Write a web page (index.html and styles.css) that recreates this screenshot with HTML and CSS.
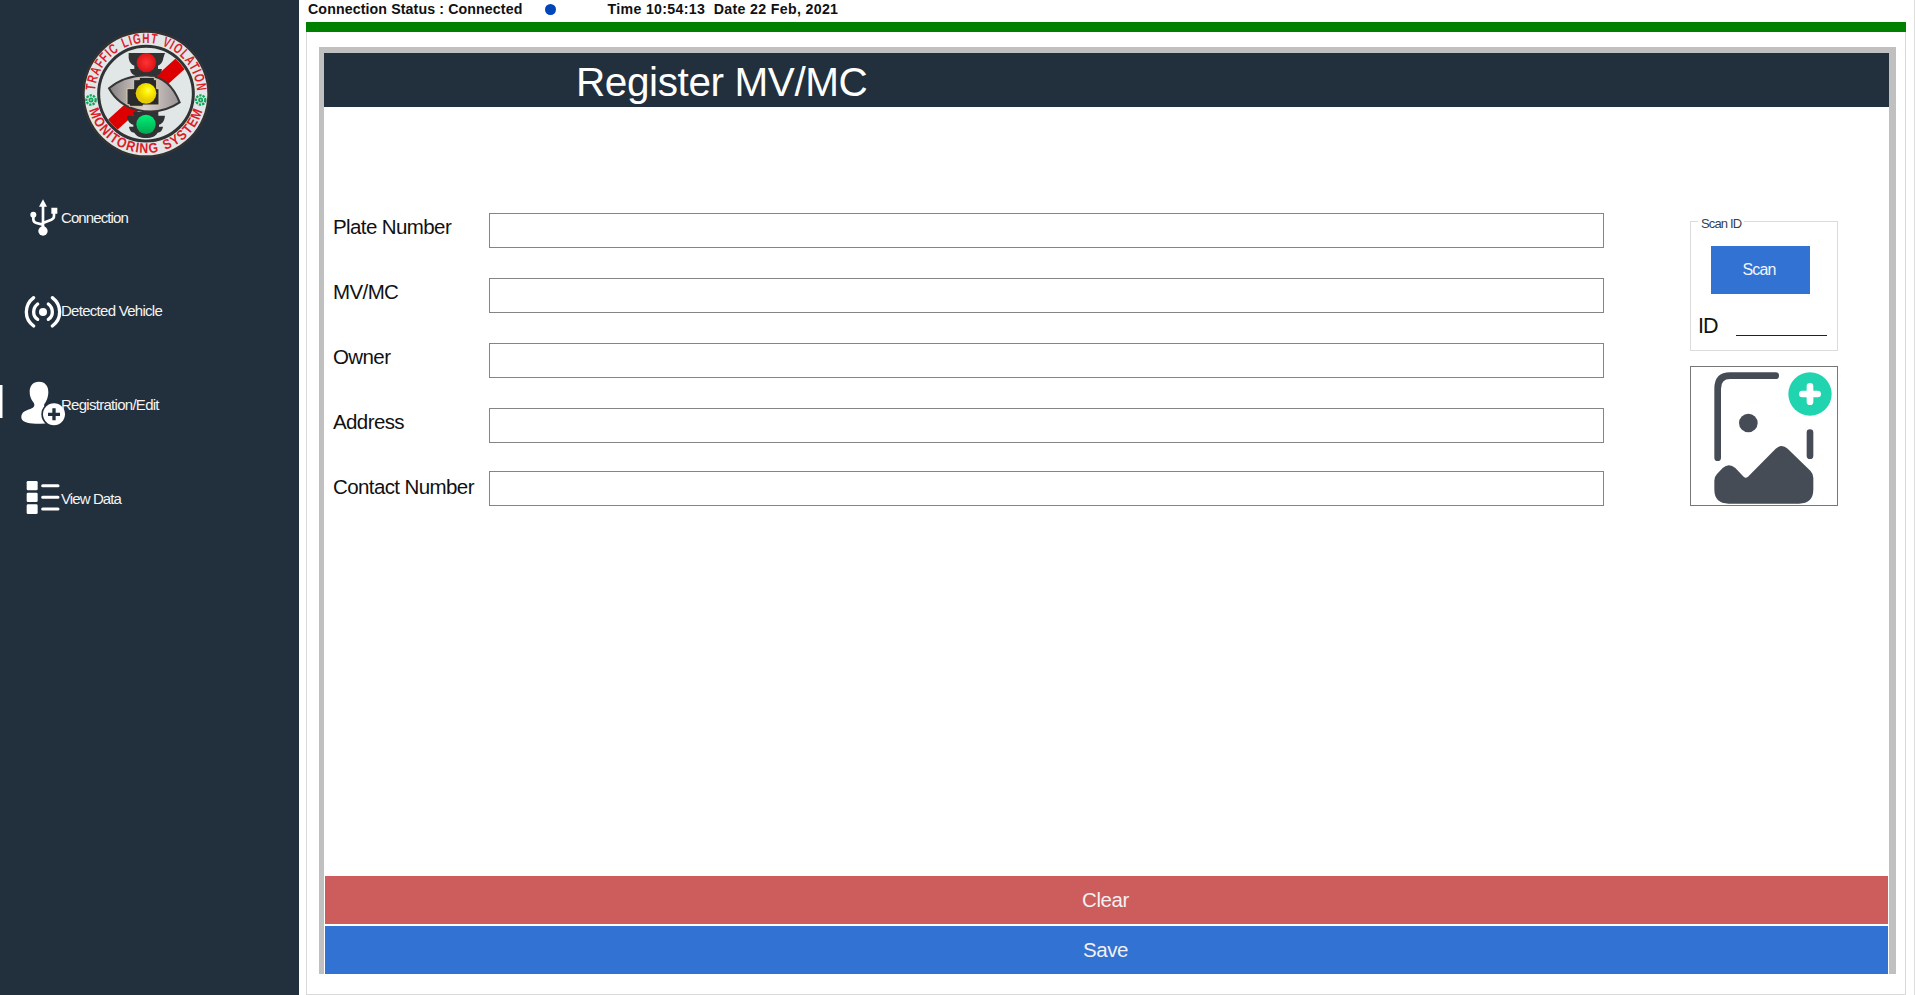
FILE: index.html
```html
<!DOCTYPE html>
<html lang="en">
<head>
<meta charset="utf-8">
<title>Register MV/MC</title>
<link rel="stylesheet" href="styles.css">
</head>
<body>
<div class="app">
  <aside class="sidebar">
    <svg class="logo" viewBox="0 0 435 435">
      <defs>
        <path id="arc-top" d="M60 222A153 153 0 0 1 366 222"/>
        <path id="arc-bottom" d="M36 222A177 177 0 0 0 390 222"/>
        <radialGradient id="red"><stop offset="0" stop-color="#f33"/><stop offset="1" stop-color="#dc1218"/></radialGradient>
        <radialGradient id="yellow" cx=".6" cy=".35"><stop offset="0" stop-color="#fffb70"/><stop offset=".35" stop-color="#fff200"/><stop offset="1" stop-color="#e6cc00"/></radialGradient>
        <linearGradient id="green" x2="0" y2="1"><stop offset="0" stop-color="#00f078"/><stop offset="1" stop-color="#00a850"/></linearGradient>
        <linearGradient id="eye"><stop offset="0" stop-color="#858182"/><stop offset=".5" stop-color="#ddd2ce"/><stop offset="1" stop-color="#999394"/></linearGradient>
        <clipPath id="disc"><circle cx="213" cy="221" r="137"/></clipPath>
      </defs>
      <circle cx="213" cy="222" r="192" fill="#303234"/>
      <circle cx="213" cy="222" r="184" fill="#e1e7e7"/>
      <circle cx="213" cy="221" r="142" fill="#e1e7e7" stroke="#303234" stroke-width="9"/>
      <path d="M90 335L345 105" stroke="#dc0000" stroke-width="42" clip-path="url(#disc)"/>
      <path d="M161 99h109l-5 15c-2 14-9 20-16 23v10h12c-2 12-8 18-14 18v10h-67v-10c-7 0-13-6-15-18h13v-10c-9-3-15-10-17-23z" fill="#303234"/>
      <path d="M156 287h19v-12h75v12h20c-2 17-9 25-18 27v6h12c-2 12-8 17-16 18-6 10-17 16-35 16s-29-6-35-16c-9-1-14-6-16-18h13v-6c-10-2-17-10-19-27z" fill="#303234"/>
      <path d="M102 205C135 178 175 165 222 167C267 171 296 201 314 247C275 273 237 282 187 270C148 260 119 237 102 205z" fill="url(#eye)" stroke="#353536" stroke-width="6"/>
      <path d="M156 206h20v-27h17v-7h45v7h7v27h7v49h-48v4h-41v-5h-7z" fill="#292a2c" stroke="#d6cbb0" stroke-width="3"/>
      <circle cx="214" cy="128" r="29" fill="url(#red)"/>
      <circle cx="213" cy="220" r="31" fill="url(#yellow)"/>
      <circle cx="213" cy="313" r="29" fill="url(#green)"/>
      <g fill="none" stroke="#0ca65b">
        <circle cx="48" cy="240" r="14" stroke-width="7" stroke-dasharray="7 3"/><circle cx="48" cy="240" r="5" stroke-width="5"/>
        <circle cx="377" cy="240" r="14" stroke-width="7" stroke-dasharray="7 3"/><circle cx="377" cy="240" r="5" stroke-width="5"/>
      </g>
      <text class="logo-text"><textPath href="#arc-top" startOffset="10" textLength="464" lengthAdjust="spacingAndGlyphs">TRAFFIC LIGHT VIOLATION</textPath></text>
      <text class="logo-text"><textPath href="#arc-bottom" startOffset="48" textLength="460" lengthAdjust="spacingAndGlyphs">MONITORING SYSTEM</textPath></text>
    </svg>
    <nav class="nav">
      <a class="nav-item">
        <svg class="nav-icon" viewBox="0 24 183 180">
          <path d="M129 155V78M100 108v13q0 9 9 11l20 5M162 98v13q0 8-8 11l-25 10" fill="none" stroke="#fff" stroke-width="8"/>
          <path d="M129 61l12 22h-24zM154 86h18v18h-18z" fill="#fff"/>
          <circle cx="100" cy="107" r="9" fill="#fff"/><circle cx="129" cy="156" r="14" fill="#fff"/>
        </svg>
        <span>Connection</span>
      </a>
      <a class="nav-item">
        <svg class="nav-icon" viewBox="0 304 183 180">
          <path d="M101 354q-22 17-22 43t22 42M157 354q22 17 22 43t-22 42M113 373q-12 9-12 24t12 22M145 373q12 9 12 24t-12 22" fill="none" stroke="#fff" stroke-width="10" stroke-linecap="round"/>
          <circle cx="129" cy="397" r="12" fill="#fff"/>
        </svg>
        <span class="wide">Detected Vehicle</span>
      </a>
      <a class="nav-item active">
        <svg class="nav-icon" viewBox="0 16 183 180">
          <path d="M117 39c19 0 29 14 28 33-1 17-7 27-12 34-3 9 5 13 14 16v42q-15 2-40 1c-26-1-42-7-43-18-1-17 13-21 27-26 12-4 15-11 9-20-7-10-11-19-11-32 0-18 10-30 28-30z" fill="#fff"/>
          <circle cx="162" cy="137" r="38" fill="#222f3c"/><circle cx="162" cy="137" r="33" fill="#fff"/>
          <path d="M162 119v36M144 137h36" stroke="#222f3c" stroke-width="10"/>
        </svg>
        <span class="wide">Registration/Edit</span>
      </a>
      <a class="nav-item">
        <svg class="nav-icon" viewBox="0 297 183 180">
          <g fill="#fff"><rect x="80" y="336" width="33" height="28" rx="4"/><rect x="80" y="371" width="33" height="28" rx="4"/><rect x="80" y="406" width="33" height="29" rx="4"/></g>
          <path d="M128 350h46M128 385h46M128 420h46" stroke="#fff" stroke-width="9" stroke-linecap="round"/>
        </svg>
        <span>View Data</span>
      </a>
    </nav>
  </aside>
  <main class="main">
    <div class="status">
      <span class="status-text">Connection Status : Connected</span>
      <span class="dot"></span>
      <span class="clock">Time 10:54:13&nbsp; Date 22 Feb, 2021</span>
    </div>
    <div class="bar"></div>
    <section class="page">
      <div class="frame">
        <header class="title">Register MV/MC</header>
        <div class="body">
          <form class="fields">
            <label class="row"><span>Plate Number</span><input class="field"></label>
            <label class="row"><span>MV/MC</span><input class="field"></label>
            <label class="row"><span>Owner</span><input class="field"></label>
            <label class="row"><span>Address</span><input class="field"></label>
            <label class="row last"><span>Contact Number</span><input class="field"></label>
          </form>
          <div class="side">
            <div class="scan">
              <span class="legend">Scan ID</span>
              <button class="scan-button">Scan</button>
              <div class="id-row"><span>ID</span><span class="id-line"></span></div>
            </div>
            <div class="photo">
              <svg class="photo-icon" viewBox="63 499 438 414">
                <path d="M143 771V564q0-39 37-39h137M420 696v69" fill="none" stroke="#464c56" stroke-width="20" stroke-linecap="round"/>
                <circle cx="235" cy="667" r="28" fill="#464c56"/>
                <path d="M133 840q0-12 8-20l17-18q19-17 38 0l25 26q6 6 13 0l83-84q18-16 36 0l68 66q9 9 9 22v34q0 43-43 43H176q-43 0-43-43z" fill="#464c56"/>
                <circle cx="420" cy="580" r="65" fill="#21d4b0"/>
                <path d="M420 557v46M397 580h46" stroke="#fff" stroke-width="20" stroke-linecap="round"/>
              </svg>
            </div>
          </div>
        </div>
        <footer class="actions">
          <button class="action clear">Clear</button>
          <button class="action save">Save</button>
        </footer>
      </div>
    </section>
  </main>
</div>
</body>
</html>
```
FILE: styles.css
```css
* { box-sizing: border-box; }
body { margin: 0; font-family: "Liberation Sans", Arial, sans-serif; background: #fff; color: #111; }
.app { display: flex; width: 100vw; height: 995px; overflow: hidden; border-right: 1px solid #ddd; }

.sidebar { width: 298.5px; flex: none; background: #222f3c; padding-top: 19.5px; }
.logo { display: block; width: 145px; height: 145px; margin-left: 75px; }
.logo-text { font-size: 42px; font-weight: bold; fill: #dc1c28; letter-spacing: 4px; word-spacing: 4px; }
.nav { padding-top: 6px; }
.nav-item { display: flex; align-items: center; height: 93.6px; color: #f4f4f4; font-size: 15px; letter-spacing: -0.9px; background: no-repeat 0 45% / 2.5px 33px; }
.nav-item .wide { letter-spacing: -0.72px; }
.nav-item.active { background-image: linear-gradient(#fff, #fff); }
.nav-icon { width: 61px; height: 60px; flex: none; overflow: visible; }

.main { flex: 1; display: flex; flex-direction: column; padding: 0 8px 0 7.5px; }
.status { display: flex; align-items: center; height: 22px; padding: 0 0 4px 2px; font-size: 14.2px; font-weight: bold; white-space: nowrap; }
.status-text { width: 237px; letter-spacing: 0.11px; }
.dot { width: 11px; height: 11px; border-radius: 50%; background: #0046b8; }
.clock { margin-left: 51.5px; letter-spacing: 0.32px; }

.bar { height: 10px; background: #008000; }
.page { flex: 1; border: 1px solid #d9d9d9; border-top: 0; padding: 15px 9px 20px 12px; display: flex; }
.frame { flex: 1; display: flex; flex-direction: column; border: solid #c0c0c0; border-width: 6px 7px 0 5px; }
.title { height: 54px; padding-left: 252px; background: #222f3c; color: #fff; font-size: 40.5px; line-height: 59px; letter-spacing: -0.4px; }
.body { flex: 1; display: flex; justify-content: space-between; padding: 106px 51px 0 9px; }
.fields { width: 1271px; }
.row { display: flex; align-items: flex-start; height: 65px; font-size: 20.5px; letter-spacing: -0.6px; }
.row span { width: 156px; line-height: 28px; white-space: nowrap; flex: none; }
.row.last .field { margin-top: -2px; }
.field { flex: none; width: 1115px; height: 35px; border: 1px solid #858585; background: #fff; }

.side { width: 148px; padding-top: 8px; }
.scan { position: relative; height: 130px; border: 1px solid #dcdcdc; padding: 24px 10px 0 7px; }
.legend { position: absolute; top: -6px; left: 7px; padding: 0 3px; background: #fff; color: #34424f; font-size: 13px; line-height: 16px; letter-spacing: -0.85px; }
.scan-button { display: block; width: 99px; height: 48px; margin-left: 13px; padding: 0 3px 0 0; border: 0; background: #3172d3; color: #f2f5fb; font: 16px "Liberation Sans", Arial, sans-serif; letter-spacing: -0.9px; }
.id-row { display: flex; justify-content: space-between; margin-top: 19px; font-size: 21.5px; line-height: 26px; letter-spacing: -1px; }
.id-line { width: 91px; height: 23px; border-bottom: 1px solid #222; }
.photo { height: 140px; margin-top: 15px; border: 1px solid #777; }
.photo-icon { display: block; width: 146px; height: 138px; }

.actions { display: grid; gap: 2px; padding: 0 1px; }
.action { height: 48px; border: 0; padding: 0 2px 0 0; color: #f3f0f2; font: 20.5px "Liberation Sans", Arial, sans-serif; letter-spacing: -0.4px; }
.clear { background: #cd5c5c; }
.save { background: #3172d3; }
```
